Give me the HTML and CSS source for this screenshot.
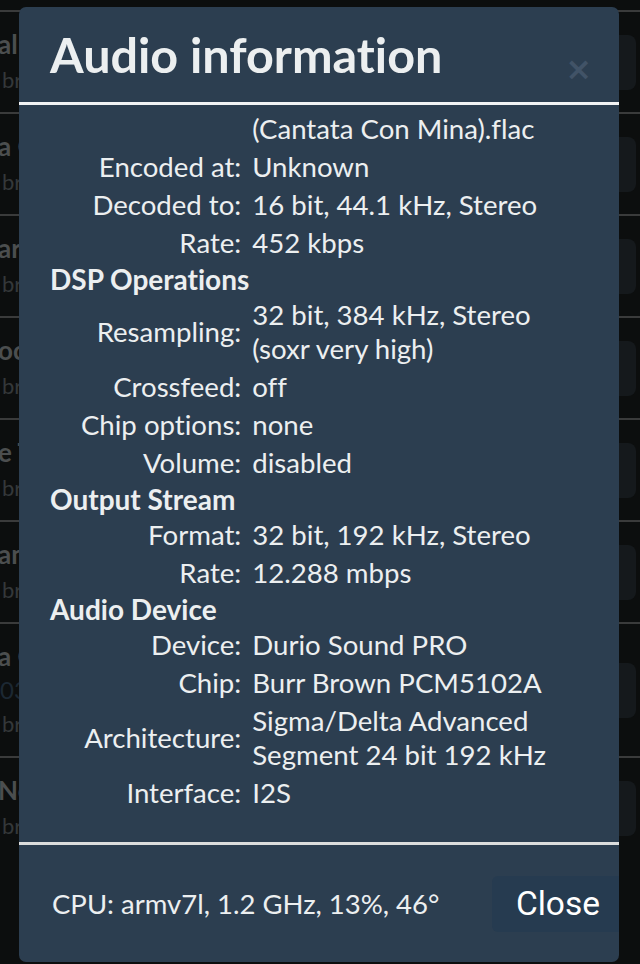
FILE: index.html
```html
<!DOCTYPE html>
<html lang="en">

<head>
  <meta charset="UTF-8">
  <meta name="viewport" content="width=device-width, initial-scale=1.0">
  <title>Audio information</title>
  <link rel="stylesheet" href="styles.css">
</head>

<body>
  <ul class="tracks">
    <li class="track">
      <div class="track-text"><span class="track-title">al Dimora</span><span class="track-sub">bravo 03:12</span></div>
      <span class="track-btn"></span>
    </li>
    <li class="track">
      <div class="track-text"><span class="track-title">a Cantata</span><span class="track-sub">bravo 04:51</span></div>
      <span class="track-btn"></span>
    </li>
    <li class="track">
      <div class="track-text"><span class="track-title">ar Vento</span><span class="track-sub">bravo 02:44</span></div>
      <span class="track-btn"></span>
    </li>
    <li class="track">
      <div class="track-text"><span class="track-title">occhi Tuoi</span><span class="track-sub">bravo 03:30</span></div>
      <span class="track-btn"></span>
    </li>
    <li class="track">
      <div class="track-text"><span class="track-title">e Tango</span><span class="track-sub">bravo 05:02</span></div>
      <span class="track-btn"></span>
    </li>
    <li class="track">
      <div class="track-text"><span class="track-title">ancora</span><span class="track-sub">bravo 03:58</span></div>
      <span class="track-btn"></span>
    </li>
    <li class="track">
      <div class="track-text"><span class="track-title">a Cantata</span><span class="track-num">03 (Cantata Con Mina)</span><span class="track-sub">bravo 04:16</span></div>
      <span class="track-btn"></span>
    </li>
    <li class="track">
      <div class="track-text"><span class="track-title">Notte</span><span class="track-sub">bravo 03:21</span></div>
      <span class="track-btn"></span>
    </li>
  </ul>

  <div class="modal">
    <header class="modal-head">
      <h1>Audio information</h1>
      <button class="modal-x" type="button">&times;</button>
    </header>

    <div class="modal-body">
      <table class="info">
        <tr><td class="key"></td><td class="val">(Cantata Con Mina).flac</td></tr>
        <tr><td class="key">Encoded at:</td><td class="val">Unknown</td></tr>
        <tr><td class="key">Decoded to:</td><td class="val">16 bit, 44.1 kHz, Stereo</td></tr>
        <tr><td class="key">Rate:</td><td class="val">452 kbps</td></tr>
        <tr class="section"><th>DSP Operations</th><td></td></tr>
        <tr><td class="key">Resampling:</td><td class="val">32 bit, 384 kHz, Stereo<br>(soxr very high)</td></tr>
        <tr><td class="key">Crossfeed:</td><td class="val">off</td></tr>
        <tr><td class="key">Chip options:</td><td class="val">none</td></tr>
        <tr><td class="key">Volume:</td><td class="val">disabled</td></tr>
        <tr class="section"><th>Output Stream</th><td></td></tr>
        <tr><td class="key">Format:</td><td class="val">32 bit, 192 kHz, Stereo</td></tr>
        <tr><td class="key">Rate:</td><td class="val">12.288 mbps</td></tr>
        <tr class="section"><th>Audio Device</th><td></td></tr>
        <tr><td class="key">Device:</td><td class="val">Durio Sound PRO</td></tr>
        <tr><td class="key">Chip:</td><td class="val">Burr Brown PCM5102A</td></tr>
        <tr><td class="key">Architecture:</td><td class="val">Sigma/Delta Advanced<br>Segment 24 bit 192 kHz</td></tr>
        <tr><td class="key">Interface:</td><td class="val">I2S</td></tr>
      </table>
    </div>

    <footer class="modal-foot">
      <span class="cpu">CPU: armv7l, 1.2 GHz, 13%, 46°</span>
      <button class="btn-close" type="button">Close</button>
    </footer>
  </div>
</body>

</html>
```

FILE: styles.css
```css
body {
  margin: 0;
  background-color: #0c0e0e;
  font-family: Lato, "Open Sans", sans-serif;
  font-variant-ligatures: none;
  overflow: hidden;
  height: 964px;
}

/* track list behind the dialog */
.tracks {
  list-style: none;
  margin: 10px 0 0;
  padding: 0;
}

.track {
  display: flex;
  align-items: center;
  justify-content: space-between;
  border-top: 2px solid #3a3b3b;
  padding: 14px 4px 14px 0;
}

.track-text {
  display: flex;
  flex-direction: column;
  white-space: nowrap;
  margin-left: -2px;
}

.track-title {
  font-size: 26px;
  font-weight: 700;
  line-height: 36px;
  color: #4b4e4f;
}

.track-num {
  font-size: 24px;
  line-height: 32px;
  color: #1c2833;
  margin-left: 2px;
}

.track-sub {
  font-size: 22px;
  line-height: 36px;
  color: #34383a;
  margin-left: 4px;
}

.track-btn {
  inline-size: 70px;
  block-size: 55px;
  border-radius: 8px;
  background-color: #15191c;
}

/* dialog */
.modal {
  position: absolute;
  top: 7px;
  left: 19px;
  width: 600px;
  height: 955px;
  display: flex;
  flex-direction: column;
  background-color: #2c3e50;
  color: #eceff0;
  border-radius: 7px;
  overflow: hidden;
}

.modal-head {
  display: flex;
  justify-content: space-between;
  align-items: flex-end;
  padding: 0 31px;
  border-bottom: 3px solid #f2f3f4;
  box-sizing: border-box;
  height: 98px;
}

.modal-head h1 {
  margin: 0 0 20px;
  font-size: 48.5px;
  font-weight: 700;
  line-height: 56px;
}

.modal-x {
  margin: 0 -4px 17px 0;
  padding: 0;
  border: 0;
  background: none;
  font-family: "DejaVu Sans", sans-serif;
  font-size: 32px;
  font-weight: 700;
  line-height: 32px;
  color: #415367;
  cursor: pointer;
}

.modal-body {
  flex: 1;
  padding: 5px 31px 0;
  overflow: hidden;
}

.info {
  border-spacing: 0;
  font-size: 27.6px;
  line-height: 34px;

  & td {
    padding: 2px 0;
    vertical-align: middle;
  }

  & .key {
    text-align: right;
    padding-right: 8px;
    white-space: nowrap;
  }

  & .val {
    padding-left: 3px;
  }

  & .section th,
  & .section td {
    padding: 0;
    text-align: left;
    font-size: 28px;
    font-weight: 700;
    white-space: nowrap;
  }
}

.modal-foot {
  display: flex;
  align-items: center;
  justify-content: space-between;
  padding: 0 0 0 33px;
  border-top: 3px solid #dcdddd;
  box-sizing: border-box;
  height: 120px;
}

.cpu {
  font-size: 27.5px;
  line-height: 34px;
}

.btn-close {
  margin-right: -5px;
  padding: 0 24px;
  height: 56px;
  border: 0;
  border-radius: 6px;
  background-color: #263b50;
  color: #ffffff;
  font-family: Roboto, sans-serif;
  font-size: 33.5px;
  cursor: pointer;
}
```
